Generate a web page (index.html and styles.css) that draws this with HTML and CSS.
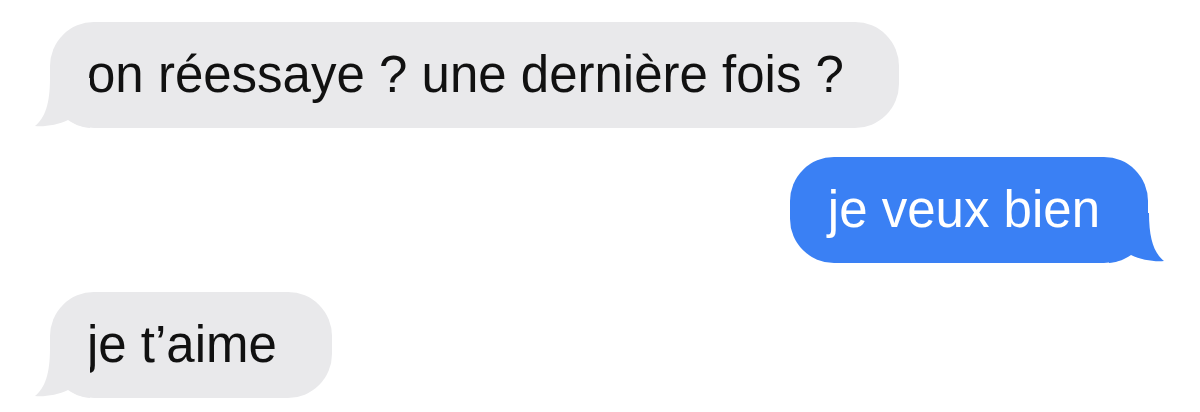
FILE: index.html
```html
<!DOCTYPE html>
<html lang="fr">
<head>
    <meta charset="UTF-8">
    <meta name="viewport" content="width=device-width, initial-scale=1.0">
    <title>Messages</title>
    <link rel="stylesheet" href="styles.css">
</head>
<body>
    <section class="chat">
        <div class="row">
            <p class="bubble them">
                on réessaye ? une dernière fois ?
                <svg class="tail" width="56" height="50" viewBox="0 0 56 50"><path d="M16 0 C16 26 11 40 1 48 C10 49 24 47 34 42 C40 46 46 49 56 50 L56 0 Z"/></svg>
            </p>
        </div>
        <div class="row me-row">
            <p class="bubble me">
                je veux bien
                <svg class="tail" width="56" height="50" viewBox="0 0 56 50"><path d="M16 0 C16 26 11 40 1 48 C10 49 24 47 34 42 C40 46 46 49 56 50 L56 0 Z"/></svg>
            </p>
        </div>
        <div class="row">
            <p class="bubble them">
                je t’aime
                <svg class="tail" width="56" height="50" viewBox="0 0 56 50"><path d="M16 0 C16 26 11 40 1 48 C10 49 24 47 34 42 C40 46 46 49 56 50 L56 0 Z"/></svg>
            </p>
        </div>
    </section>
</body>
</html>
```

FILE: styles.css
```css
body {
    margin: 0;
    background-color: #fff;
    font-family: "Liberation Sans", Arial, sans-serif;
}
.chat {
    display: flex;
    flex-direction: column;
    gap: 29px;
    padding: 22px 52px 0 50px;
}
.row {
    display: flex;
}
.me-row {
    justify-content: flex-end;
}
.bubble {
    position: relative;
    margin: 0;
    height: 106px;
    line-height: 106px;
    font-size: 51px;
    padding: 0 55px 0 37px;
    border-radius: 44px;
    white-space: nowrap;
}
.them {
    background-color: #e9e9eb;
    color: #111;
}
.me {
    background-color: #3a80f4;
    color: #fff;
    padding: 0 48px 0 38px;
}
.tail {
    position: absolute;
    bottom: 0;
}
.them .tail {
    left: -16px;
    fill: #e9e9eb;
}
.me .tail {
    right: -17px;
    fill: #3a80f4;
    transform: scaleX(-1);
}
```
